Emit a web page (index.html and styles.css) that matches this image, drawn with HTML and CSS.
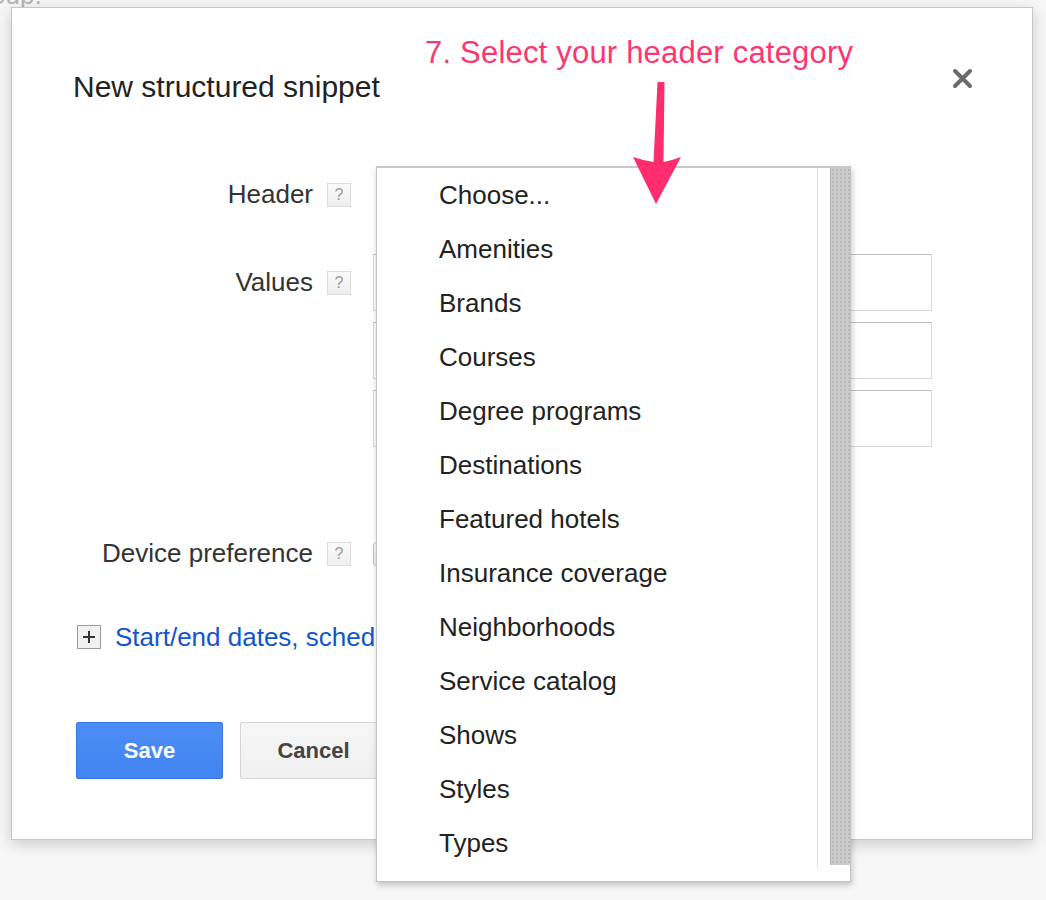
FILE: index.html
```html
<!DOCTYPE html>
<html lang="en">
<head>
    <meta charset="UTF-8">
    <title>New structured snippet</title>
    <link rel="stylesheet" href="styles.css">
</head>
<body>
    <div class="backdrop-text">group.</div>

    <div class="dialog">
        <div class="dialog-head">
            <div class="dialog-title">New structured snippet</div>
            <svg class="close" width="21" height="21" viewBox="0 0 21 21">
                <path d="M3 3 L18 18 M18 3 L3 18" stroke="#6b6b6b" stroke-width="4" stroke-linecap="round"/>
            </svg>
        </div>

        <div class="form-row row-header" style="--h: 50px">
            <div class="row-label">Header</div>
            <div class="help-cell"><span class="help">?</span></div>
            <div class="field"></div>
        </div>

        <div class="form-row" style="--h: 57px">
            <div class="row-label">Values</div>
            <div class="help-cell"><span class="help">?</span></div>
            <div class="field field-stack">
                <div class="text-input"></div>
                <div class="text-input"></div>
                <div class="text-input"></div>
            </div>
        </div>

        <div class="form-row row-device" style="--h: 48px">
            <div class="row-label">Device preference</div>
            <div class="help-cell"><span class="help">?</span></div>
            <div class="field field-center">
                <div class="select-box"></div>
            </div>
        </div>

        <div class="more-row">
            <svg class="expander" width="24" height="24" viewBox="0 0 24 24">
                <rect x="0.5" y="0.5" width="23" height="23" fill="#f1f1f1" stroke="#9a9a9a"/>
                <path d="M6 12 H18 M12 6 V18" stroke="#333" stroke-width="2"/>
            </svg>
            <a class="more-link" href="#">Start/end dates, scheduling</a>
        </div>

        <div class="button-row">
            <button class="btn btn-save">Save</button>
            <button class="btn btn-cancel">Cancel</button>
        </div>
    </div>

    <!-- open header dropdown, drawn over the form -->
    <div class="dropdown">
        <ul class="dropdown-list">
            <li>Choose...</li>
            <li>Amenities</li>
            <li>Brands</li>
            <li>Courses</li>
            <li>Degree programs</li>
            <li>Destinations</li>
            <li>Featured hotels</li>
            <li>Insurance coverage</li>
            <li>Neighborhoods</li>
            <li>Service catalog</li>
            <li>Shows</li>
            <li>Styles</li>
            <li>Types</li>
        </ul>
        <div class="scroll-track">
            <div class="scroll-thumb"></div>
        </div>
    </div>

    <!-- annotation -->
    <div class="note">7. Select your header category</div>
    <svg class="note-arrow" width="60" height="130" viewBox="0 0 60 130">
        <path d="M24.5 0 L31.5 0 L30.5 80 C36 79 42 77 48 75 L23 122 L0 75 C7 77 14 79 20.5 80 Z" fill="#ff2d6e"/>
    </svg>
</body>
</html>
```

FILE: styles.css
```css
body {
    margin: 0;
    background-color: #f7f7f7;
    font-family: "Liberation Sans", Arial, sans-serif;
    color: #333;
    position: relative;
    min-height: 900px;
    overflow: hidden;
}

.backdrop-text {
    position: absolute;
    left: -32px;
    top: -20px;
    font-size: 26px;
    line-height: 30px;
    color: #b5b5b5;
}

.dialog {
    position: relative;
    margin: 7px 0 0 11px;
    width: 1022px;
    box-sizing: border-box;
    padding: 62px 59px 60px 11px;
    background-color: #fff;
    border: 1px solid #c6c6c6;
    box-shadow: 0 4px 14px rgba(0, 0, 0, 0.18);
}

.dialog-head {
    display: flex;
    justify-content: space-between;
    align-items: flex-start;
    margin-left: 50px;
}

.dialog-title {
    font-size: 30px;
    line-height: 34px;
    color: #222;
}

.close {
    margin-top: -2px;
}

/* form rows */
.form-row {
    display: flex;
    align-items: flex-start;
    margin-top: 34px;
}

.row-header {
    margin-top: 66px;
}

.row-device {
    margin-top: 83px;
}

.row-label {
    width: 290px;
    height: var(--h);
    display: flex;
    align-items: center;
    justify-content: flex-end;
    font-size: 26px;
    line-height: 30px;
    color: #333;
    padding-bottom: 2px;
    box-sizing: border-box;
}

.help-cell {
    height: var(--h);
    display: flex;
    align-items: center;
    margin: 0 22px 0 14px;
}

.help {
    width: 24px;
    height: 24px;
    box-sizing: border-box;
    border: 1px solid #dcdcdc;
    background: linear-gradient(#fafafa, #efefef);
    color: #999;
    font-size: 16px;
    line-height: 22px;
    text-align: center;
}

.field {
    width: 559px;
    height: var(--h);
}

.field-stack {
    height: auto;
    display: flex;
    flex-direction: column;
    gap: 11px;
}

.field-center {
    display: flex;
    align-items: center;
}

.text-input {
    height: 57px;
    box-sizing: border-box;
    border: 1px solid #d9d9d9;
    border-top-color: #c0c0c0;
    background: #fff;
}

.select-box {
    width: 200px;
    height: 24px;
    box-sizing: border-box;
    border: 1px solid #c8c8c8;
    border-radius: 3px;
    background: linear-gradient(#fafafa, #eeeeee);
}

/* expandable section */
.more-row {
    display: flex;
    align-items: center;
    gap: 14px;
    height: 30px;
    margin: 44px 0 0 54px;
}

.more-link {
    font-size: 26px;
    line-height: 30px;
    color: #1155cc;
    text-decoration: none;
    white-space: nowrap;
}

/* buttons */
.button-row {
    display: flex;
    gap: 17px;
    margin: 70px 0 0 53px;
}

.btn {
    width: 147px;
    height: 57px;
    box-sizing: border-box;
    font-family: "Liberation Sans", Arial, sans-serif;
    font-size: 22px;
    font-weight: bold;
    border-radius: 2px;
    padding: 0;
}

.btn-save {
    color: #fff;
    background: linear-gradient(#4b8ef6, #4284f0);
    border: 1px solid #3574e6;
}

.btn-cancel {
    color: #444;
    background: linear-gradient(#f6f6f6, #f0f0f0);
    border: 1px solid #d6d6d6;
}

/* dropdown */
.dropdown {
    position: absolute;
    left: 376px;
    top: 166px;
    width: 475px;
    height: 716px;
    box-sizing: border-box;
    display: flex;
    background: #fff;
    border: 1px solid #c3c3c3;
    border-top: 2px solid #c9c9c9;
    box-shadow: 1px 3px 6px rgba(0, 0, 0, 0.22);
}

.dropdown-list {
    list-style: none;
    margin: 0;
    padding: 0 0 0 62px;
    width: 441px;
    height: 700px;
    box-sizing: border-box;
    border-right: 1px solid #e4e4e4;
}

.dropdown-list li {
    height: 54px;
    line-height: 54px;
    font-size: 26px;
    color: #222;
}

.scroll-track {
    flex: 1;
    display: flex;
    justify-content: flex-end;
}

.scroll-thumb {
    width: 20px;
    height: 697px;
    box-sizing: border-box;
    background-color: #cbcbcb;
    background-image: radial-gradient(#b9b9b9 0.7px, transparent 0.9px);
    background-size: 4px 4px;
    border-left: 1px solid #b0b0b0;
}

/* annotation */
.note {
    position: absolute;
    left: 425px;
    top: 35px;
    font-size: 31px;
    line-height: 36px;
    letter-spacing: 0.2px;
    color: #ff3570;
}

.note-arrow {
    position: absolute;
    left: 633px;
    top: 82px;
}
```
